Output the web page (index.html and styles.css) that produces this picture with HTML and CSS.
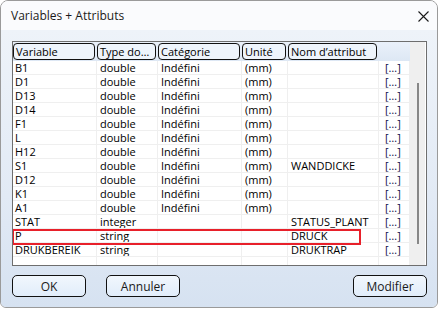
FILE: index.html
```html
<!DOCTYPE html>
<html lang="fr">
<head>
    <meta charset="UTF-8">
    <meta name="viewport" content="width=device-width, initial-scale=1.0">
    <title>Variables + Attributs</title>
    <link rel="stylesheet" href="styles.css">
</head>
<body>
    <div class="window">
        <div class="titlebar">
            <span class="title">Variables + Attributs</span>
            <svg class="close" width="11" height="11" viewBox="0 0 11 11">
                <path d="M0.5 0.5 L10.5 10.5 M10.5 0.5 L0.5 10.5" stroke="#1a1a1a" stroke-width="1.1" fill="none"/>
            </svg>
        </div>
        <div class="content">
            <div class="list">
                <div class="grid">
                    <div class="head">
                        <div class="hcell">Variable</div>
                        <div class="hcell">Type do…</div>
                        <div class="hcell">Catégorie</div>
                        <div class="hcell">Unité</div>
                        <div class="hcell">Nom d’attribut</div>
                        <div class="hcell empty"></div>
                    </div>
                    <div class="row"><span>B1</span><span>double</span><span>Indéfini</span><span>(mm)</span><span></span><span class="more">[…]</span></div>
                    <div class="row"><span>D1</span><span>double</span><span>Indéfini</span><span>(mm)</span><span></span><span class="more">[…]</span></div>
                    <div class="row"><span>D13</span><span>double</span><span>Indéfini</span><span>(mm)</span><span></span><span class="more">[…]</span></div>
                    <div class="row"><span>D14</span><span>double</span><span>Indéfini</span><span>(mm)</span><span></span><span class="more">[…]</span></div>
                    <div class="row"><span>F1</span><span>double</span><span>Indéfini</span><span>(mm)</span><span></span><span class="more">[…]</span></div>
                    <div class="row"><span>L</span><span>double</span><span>Indéfini</span><span>(mm)</span><span></span><span class="more">[…]</span></div>
                    <div class="row"><span>H12</span><span>double</span><span>Indéfini</span><span>(mm)</span><span></span><span class="more">[…]</span></div>
                    <div class="row"><span>S1</span><span>double</span><span>Indéfini</span><span>(mm)</span><span>WANDDICKE</span><span class="more">[…]</span></div>
                    <div class="row"><span>D12</span><span>double</span><span>Indéfini</span><span>(mm)</span><span></span><span class="more">[…]</span></div>
                    <div class="row"><span>K1</span><span>double</span><span>Indéfini</span><span>(mm)</span><span></span><span class="more">[…]</span></div>
                    <div class="row"><span>A1</span><span>double</span><span>Indéfini</span><span>(mm)</span><span></span><span class="more">[…]</span></div>
                    <div class="row"><span>STAT</span><span>integer</span><span></span><span></span><span>STATUS_PLANT</span><span class="more">[…]</span></div>
                    <div class="row"><span>P</span><span>string</span><span></span><span></span><span>DRUCK</span><span class="more">[…]</span></div>
                    <div class="row"><span>DRUKBEREIK</span><span>string</span><span></span><span></span><span>DRUKTRAP</span><span class="more">[…]</span></div>
                    <div class="row"><span></span><span></span><span></span><span></span><span></span><span></span></div>
                </div>
                <div class="scrollbar"><div class="thumb"></div></div>
                <div class="highlight"></div>
            </div>
            <div class="buttons">
                <button class="btn">OK</button>
                <button class="btn">Annuler</button>
                <button class="btn right">Modifier</button>
            </div>
        </div>
    </div>
</body>
</html>
```

FILE: styles.css
```css
body {
    margin: 0;
    padding: 0;
    background: #ffffff;
    font-family: 'Open Sans', 'Noto Sans', sans-serif;
    color: #000;
}
.window {
    width: 438px;
    height: 308px;
    box-sizing: border-box;
    border: 1px solid #9a9a9a;
    border-radius: 8px 8px 6px 6px;
    overflow: hidden;
    display: flex;
    flex-direction: column;
    background: #f9fafc;
}
.titlebar {
    height: 29px;
    display: flex;
    align-items: center;
    justify-content: space-between;
    padding: 0 8px 0 10px;
    background: #fafbfd;
}
.title {
    font-size: 12px;
    color: #1a1a1a;
}
.close {
    margin-top: 1px;
}
.content {
    flex-grow: 1;
    padding: 11px 10px 0 11px;
    background: linear-gradient(180deg, #eef3f9 0%, #e2eaf5 60%, #d6e2f1 100%);
}
.list {
    position: relative;
    height: 223px;
    border: 1px solid #6e6e6e;
    background: #ffffff;
    display: flex;
    overflow: hidden;
}
.grid {
    width: 397px;
    font-size: 11px;
}
.head {
    display: grid;
    grid-template-columns: 84px 61px 84px 46px 91px 31px;
    height: 19px;
    background: linear-gradient(180deg, #eaf1fa, #dde7f4);
}
.hcell {
    margin: 1px 2px 1px 0;
    height: 15px;
    border: 1px solid #111;
    border-radius: 4px;
    padding-left: 2px;
    line-height: 15px;
    white-space: nowrap;
    overflow: hidden;
    background: #eef4fb;
}
.hcell.empty {
    border: none;
    background: transparent;
}
.row {
    display: grid;
    grid-template-columns: 84px 61px 84px 46px 91px 31px;
    height: 14px;
    line-height: 13px;
}
.row span {
    border-bottom: 1px solid #efefef;
    border-right: 1px solid #efefef;
    padding-left: 3px;
    white-space: nowrap;
    overflow: hidden;
}
.row span:first-child {
    padding-left: 2px;
}
.row .more {
    padding-left: 6px;
    color: #10104a;
}
.scrollbar {
    width: 15px;
    background: #efefef;
    position: relative;
}
.thumb {
    position: absolute;
    left: 7px;
    top: 41px;
    width: 2px;
    height: 161px;
    background: #878787;
}
.highlight {
    position: absolute;
    left: -1px;
    top: 187px;
    width: 349px;
    height: 16px;
    box-sizing: border-box;
    border: 2px solid #e8202a;
}
.buttons {
    display: flex;
    gap: 20px;
    margin-top: 9px;
}
.btn {
    width: 74px;
    height: 22px;
    border: 1px solid #111;
    border-radius: 5px;
    background: linear-gradient(180deg, #f1f7fd, #e1edfa);
    font-family: 'Open Sans', 'Noto Sans', sans-serif;
    font-size: 12px;
    color: #1a1a1a;
    padding: 0;
}
.btn.right {
    margin-left: auto;
}
```
